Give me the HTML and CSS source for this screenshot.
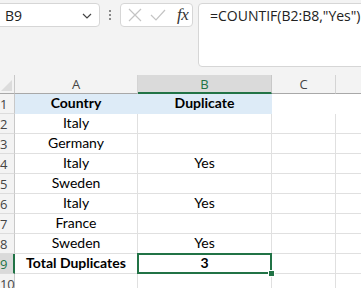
FILE: index.html
```html
<!DOCTYPE html>
<html>
<head>
<meta charset="utf-8">
<link rel="stylesheet" href="styles.css">
</head>
<body>
<div class="top">
  <div class="namebox">
    <span>B9</span>
    <svg class="chev" width="10" height="6" viewBox="0 0 10 6"><path d="M1 1 L5 5 L9 1" fill="none" stroke="#444" stroke-width="1.2"/></svg>
  </div>
  <div class="dots"><i></i><i></i><i></i></div>
  <div class="btns">
    <svg width="14" height="14" viewBox="0 0 14 14"><path d="M1 1 L13 13 M13 1 L1 13" stroke="#c4c4c4" stroke-width="1.2" fill="none"/></svg>
    <svg width="16" height="12" viewBox="0 0 16 12"><path d="M1 6 L6 11 L15 1" stroke="#c4c4c4" stroke-width="1.2" fill="none"/></svg>
    <span class="fx">fx</span>
  </div>
  <div class="formula">=COUNTIF(B2:B8,"Yes")</div>
</div>
<div class="sheet">
  <div class="corner"><span class="tri"></span></div>
  <div class="ch">A</div>
  <div class="ch chsel">B</div>
  <div class="ch">C</div>
  <div class="ch chlast"></div>

  <div class="rh">1</div>
  <div class="c fill b">Country</div>
  <div class="c fill b">Duplicate</div>
  <div class="c nob"></div>
  <div class="c nob"></div>

  <div class="rh">2</div>
  <div class="c">Italy</div><div class="c"></div><div class="c"></div><div class="c"></div>
  <div class="rh">3</div>
  <div class="c">Germany</div><div class="c"></div><div class="c"></div><div class="c"></div>
  <div class="rh">4</div>
  <div class="c">Italy</div><div class="c">Yes</div><div class="c"></div><div class="c"></div>
  <div class="rh">5</div>
  <div class="c">Sweden</div><div class="c"></div><div class="c"></div><div class="c"></div>
  <div class="rh">6</div>
  <div class="c">Italy</div><div class="c">Yes</div><div class="c"></div><div class="c"></div>
  <div class="rh">7</div>
  <div class="c">France</div><div class="c"></div><div class="c"></div><div class="c"></div>
  <div class="rh">8</div>
  <div class="c">Sweden</div><div class="c">Yes</div><div class="c"></div><div class="c"></div>
  <div class="rh rhsel">9</div>
  <div class="c b">Total Duplicates</div><div class="c b sel">3</div><div class="c"></div><div class="c"></div>
  <div class="rh">10</div>
  <div class="c"></div><div class="c"></div><div class="c"></div><div class="c"></div>
</div>
</body>
</html>
```
FILE: styles.css
```css
html, body {
  margin: 0;
  padding: 0;
  background: #f3f3f3;
  overflow: hidden;
}
body {
  width: 361px;
  height: 288px;
  font-family: "Open Sans", "Noto Sans", sans-serif;
}
.top {
  height: 75px;
  box-sizing: border-box;
  padding-top: 3px;
  display: flex;
  align-items: flex-start;
}
.namebox {
  margin-left: -4px;
  width: 104px;
  height: 24px;
  box-sizing: border-box;
  border: 1px solid #d6d6d6;
  border-radius: 4px;
  background: #fff;
  display: flex;
  align-items: center;
  justify-content: space-between;
  padding: 0 7px 0 8px;
  font-size: 14px;
  color: #222;
}
.chev { margin-top: 1px; }
.dots {
  width: 20px;
  height: 24px;
  display: flex;
  flex-direction: column;
  align-items: center;
  justify-content: center;
  gap: 2px;
}
.dots i {
  display: block;
  width: 2px;
  height: 2px;
  background: #8a8a8a;
}
.btns {
  width: 73px;
  height: 24px;
  box-sizing: border-box;
  border: 1px solid #d6d6d6;
  border-radius: 4px;
  background: #fff;
  display: flex;
  align-items: center;
  padding-left: 7px;
  gap: 8px;
}
.fx {
  font-family: "Liberation Serif", serif;
  font-style: italic;
  font-size: 17px;
  color: #333;
  margin-left: 3px;
  letter-spacing: -0.5px;
}
.formula {
  flex: 1;
  margin-left: 5px;
  margin-right: -6px;
  height: 64px;
  box-sizing: border-box;
  border: 1px solid #d6d6d6;
  border-radius: 4px;
  background: #fff;
  padding: 2px 0 0 11px;
  font-size: 14px;
  line-height: 20px;
  color: #222;
}
.sheet {
  display: grid;
  grid-template-columns: 15px 123px 134px 64px 64px;
  grid-template-rows: 19px repeat(10, 20px);
  font-family: "Lato", "Liberation Sans", sans-serif;
  font-size: 14px;
  color: #000;
}
.corner {
  position: relative;
  border-right: 1px solid #c8c8c8;
  border-bottom: 1px solid #a8a8a8;
  box-sizing: border-box;
  overflow: hidden;
}
.tri {
  position: absolute;
  right: 2px;
  bottom: 2px;
  width: 0;
  height: 0;
  border-left: 11px solid transparent;
  border-bottom: 11px solid #dcdcdc;
}
.ch {
  box-sizing: border-box;
  border-right: 1px solid #d4d4d4;
  border-bottom: 1px solid #a8a8a8;
  font-family: "Open Sans", "Noto Sans", sans-serif;
  font-size: 13px;
  color: #444;
  display: flex;
  align-items: center;
  justify-content: center;
}
.chsel {
  background: #dadada;
  color: #217346;
  border-bottom: 2px solid #217346;
  border-right-color: #c8c8c8;
}
.chlast { border-right: none; }
.rh {
  box-sizing: border-box;
  border-right: 1px solid #c8c8c8;
  border-bottom: 1px solid #dcdcdc;
  font-family: "Open Sans", "Noto Sans", sans-serif;
  font-size: 13px;
  color: #444;
  display: flex;
  align-items: center;
  white-space: nowrap;
  overflow: visible;
  padding-left: 0;
  letter-spacing: -0.3px;
}
.rhsel {
  background: #dadada;
  color: #217346;
  border-right: 2px solid #217346;
}
.c {
  box-sizing: border-box;
  background: #fff;
  border-right: 1px solid #e0e0e0;
  border-bottom: 1px solid #e0e0e0;
  display: flex;
  align-items: flex-end;
  justify-content: center;
  line-height: 18px;
  padding-bottom: 1px;
  white-space: nowrap;
}
.fill {
  background: #ddebf7;
  border-color: #ddebf7;
}
.nob { border-color: #fff; }
.b { font-weight: bold; }
.sel { position: relative; }
.sel::after {
  content: "";
  position: absolute;
  left: -1px;
  top: -1px;
  right: -1px;
  bottom: -1px;
  border: 2px solid #217346;
}
.sel::before {
  content: "";
  position: absolute;
  right: -4px;
  bottom: -4px;
  width: 5px;
  height: 5px;
  background: #217346;
  border: 1px solid #fff;
  z-index: 2;
}
```
